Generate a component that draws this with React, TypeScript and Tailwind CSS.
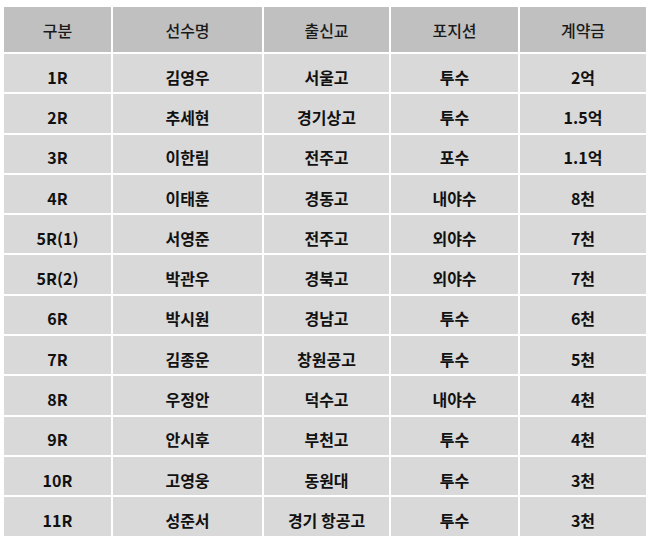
import React from "react";

const rows: string[][] = [
  ["1R", "김영우", "서울고", "투수", "2억"],
  ["2R", "추세현", "경기상고", "투수", "1.5억"],
  ["3R", "이한림", "전주고", "포수", "1.1억"],
  ["4R", "이태훈", "경동고", "내야수", "8천"],
  ["5R(1)", "서영준", "전주고", "외야수", "7천"],
  ["5R(2)", "박관우", "경북고", "외야수", "7천"],
  ["6R", "박시원", "경남고", "투수", "6천"],
  ["7R", "김종운", "창원공고", "투수", "5천"],
  ["8R", "우정안", "덕수고", "내야수", "4천"],
  ["9R", "안시후", "부천고", "투수", "4천"],
  ["10R", "고영웅", "동원대", "투수", "3천"],
  ["11R", "성준서", "경기 항공고", "투수", "3천"],
];

const headers = ["구분", "선수명", "출신교", "포지션", "계약금"];

export default function App() {
  return (
    <div
      className="w-[658px] h-[542px] overflow-hidden bg-white pt-[7px] pl-[4px]"
      style={{ fontFamily: '"Noto Sans CJK KR", "Noto Sans", sans-serif' }}
    >
      <div className="grid w-[642px] grid-cols-[107px_149px_125px_127px_126px] gap-[2px] bg-white">
        {headers.map((h) => (
          <div
            key={h}
            className="flex h-[45px] items-center justify-center bg-[#c0c0c0] pt-[1px] text-[16px] font-medium leading-none text-[#1a1a1a]"
          >
            {h}
          </div>
        ))}
        {rows.map((r, i) =>
          r.map((c, j) => (
            <div
              key={`${i}-${j}`}
              className="flex h-[38.3px] items-center justify-center bg-[#d9d9d9] pt-[7px] text-[16px] font-bold leading-none text-[#111]"
            >
              {c}
            </div>
          ))
        )}
      </div>
    </div>
  );
}
